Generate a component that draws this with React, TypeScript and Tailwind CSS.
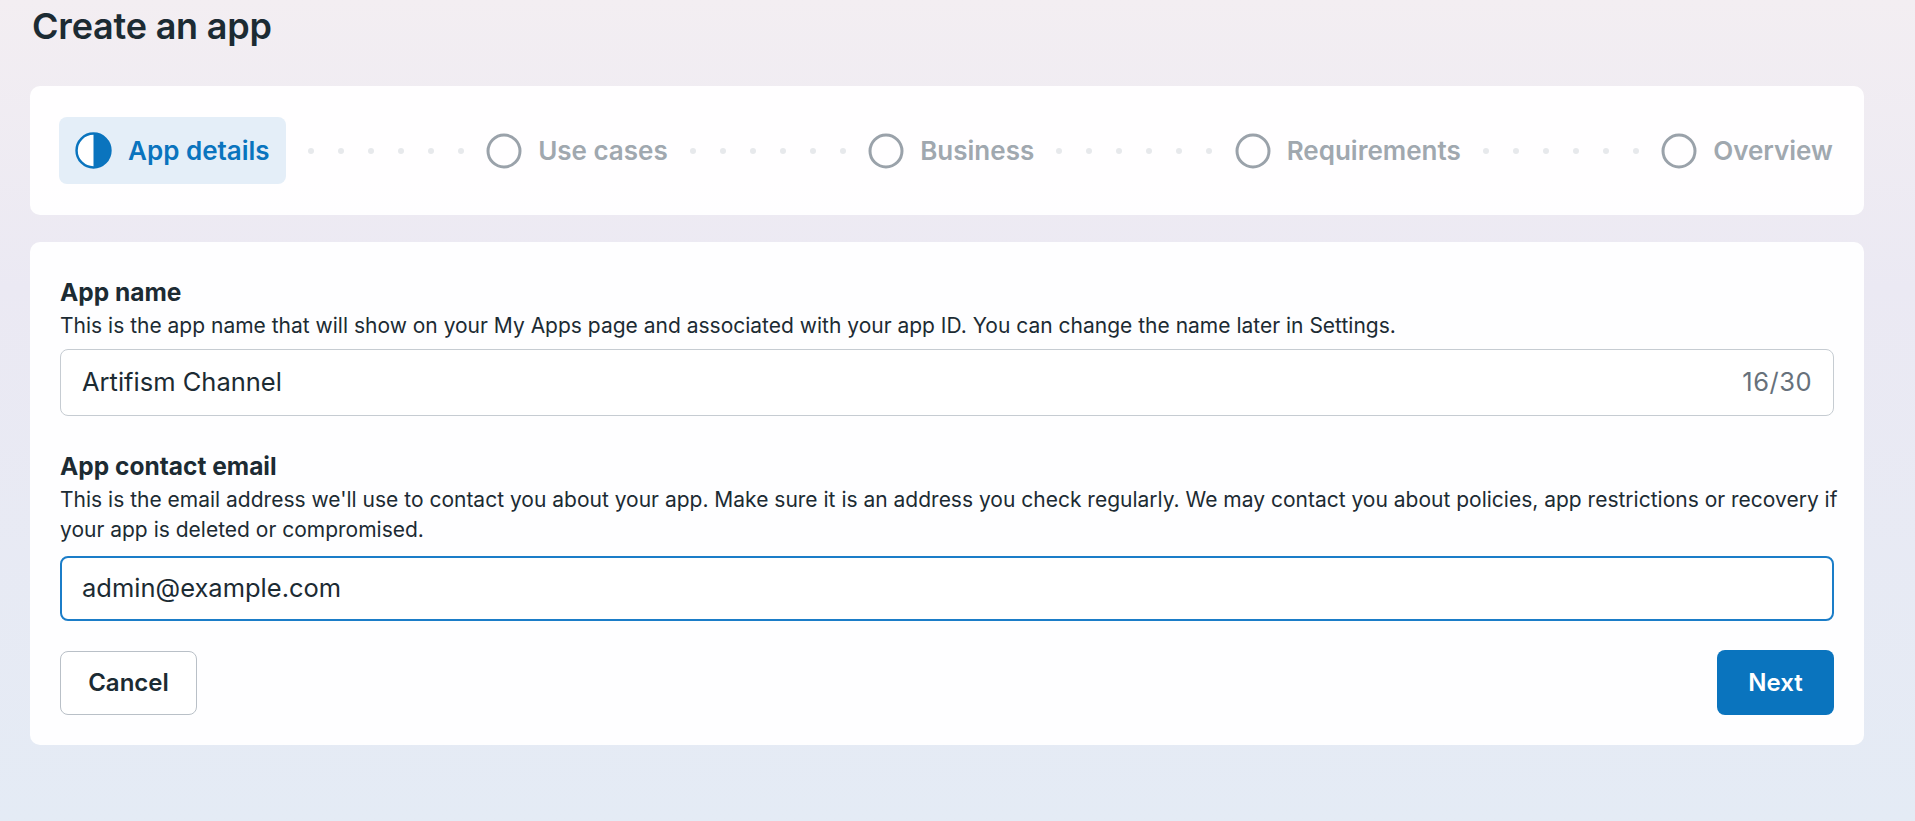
import type { ReactNode } from 'react'

function HalfCircle() {
  return (
    <svg viewBox="0 0 36 36" className="h-[37px] w-[37px] shrink-0" aria-hidden="true">
      <circle cx="18" cy="18" r="16.5" fill="#ffffff" stroke="#0a74be" strokeWidth="2.4" />
      <path d="M18 1.5 A16.5 16.5 0 0 1 18 34.5 Z" fill="#0a74be" />
    </svg>
  )
}

function EmptyCircle() {
  return (
    <svg viewBox="0 0 36 36" className="h-9 w-9 shrink-0" aria-hidden="true">
      <circle cx="18" cy="18" r="16" fill="none" stroke="#9aa2aa" strokeWidth="3" />
    </svg>
  )
}

function Dots() {
  return (
    <div className="flex items-center gap-[24px]">
      {[0, 1, 2, 3, 4, 5].map((i) => (
        <span key={i} className="h-[6px] w-[6px] rounded-full bg-[#e7e9ec]" />
      ))}
    </div>
  )
}

function Step({ label }: { label: string }) {
  return (
    <div className="flex items-center gap-4">
      <EmptyCircle />
      <span className="text-[26px] font-semibold text-[#a0a8af]">{label}</span>
    </div>
  )
}

function Field({ label, help, children }: { label: string; help: ReactNode; children: ReactNode }) {
  return (
    <div>
      <div className="text-[24.5px] font-bold leading-[30px] text-[#1c2b33]">{label}</div>
      <div className="mt-1 whitespace-nowrap text-[21px] leading-[30px] text-[#1c2b33]">{help}</div>
      {children}
    </div>
  )
}

export default function App() {
  return (
    <div className="min-h-screen bg-[linear-gradient(180deg,#f3eef2_0%,#ebe9f3_35%,#e4ebf5_100%)] font-[Inter,'Liberation_Sans',sans-serif] text-[#1c2b33]">
      <div className="w-[1864px] pl-[30px] pt-1">
        <h1 className="pl-[2px] text-[36px] font-semibold leading-[44px] tracking-[-0.2px] text-[#1c2b33]">
          Create an app
        </h1>

        {/* stepper */}
        <div className="mt-[38px] rounded-[10px] bg-white/95 px-[29px] py-[31px]">
          <div className="flex items-center justify-between pr-[2px]">
            <div className="flex h-[67px] items-center gap-4 rounded-lg bg-[#e4eef8] pl-4 pr-4">
              <HalfCircle />
              <span className="text-[26px] font-semibold text-[#0a74be]">App details</span>
            </div>
            <Dots />
            <Step label="Use cases" />
            <Dots />
            <Step label="Business" />
            <Dots />
            <Step label="Requirements" />
            <Dots />
            <Step label="Overview" />
          </div>
        </div>

        {/* form */}
        <div className="mt-[27px] rounded-[10px] bg-white/95 px-[30px] pb-[30px] pt-[35px]">
          <Field
            label="App name"
            help="This is the app name that will show on your My Apps page and associated with your app ID. You can change the name later in Settings."
          >
            <div className="mt-[8px] flex h-[67px] items-center justify-between rounded-lg border-[1.5px] border-[#c6ccd2] bg-white px-[21px]">
              <span className="text-[25.5px] text-[#1c2b33]">Artifism Channel</span>
              <span className="text-[25.5px] tracking-[0.5px] text-[#67717b]">16/30</span>
            </div>
          </Field>

          <div className="mt-[35px]">
            <Field
              label="App contact email"
              help={
                <>
                  This is the email address we'll use to contact you about your app. Make sure it is an address you
                  check regularly. We may contact you about policies, app restrictions or recovery if
                  <br />
                  your app is deleted or compromised.
                </>
              }
            >
              <div className="mt-[11px] flex h-[65px] items-center rounded-lg border-2 border-[#1b7dc8] bg-white px-[20px]">
                <span className="text-[25.5px] text-[#1c2b33]">admin@example.com</span>
              </div>
            </Field>
          </div>

          <div className="mt-[29px] flex items-center justify-between">
            <button
              type="button"
              className="h-[64px] w-[137px] rounded-lg border-[1.5px] border-[#b9c0c7] bg-white text-[24px] font-semibold text-[#1c2b33]"
            >
              Cancel
            </button>
            <button
              type="button"
              className="h-[65px] w-[117px] rounded-lg bg-[#0a74be] text-[24px] font-semibold text-white"
            >
              Next
            </button>
          </div>
        </div>
      </div>
    </div>
  )
}
